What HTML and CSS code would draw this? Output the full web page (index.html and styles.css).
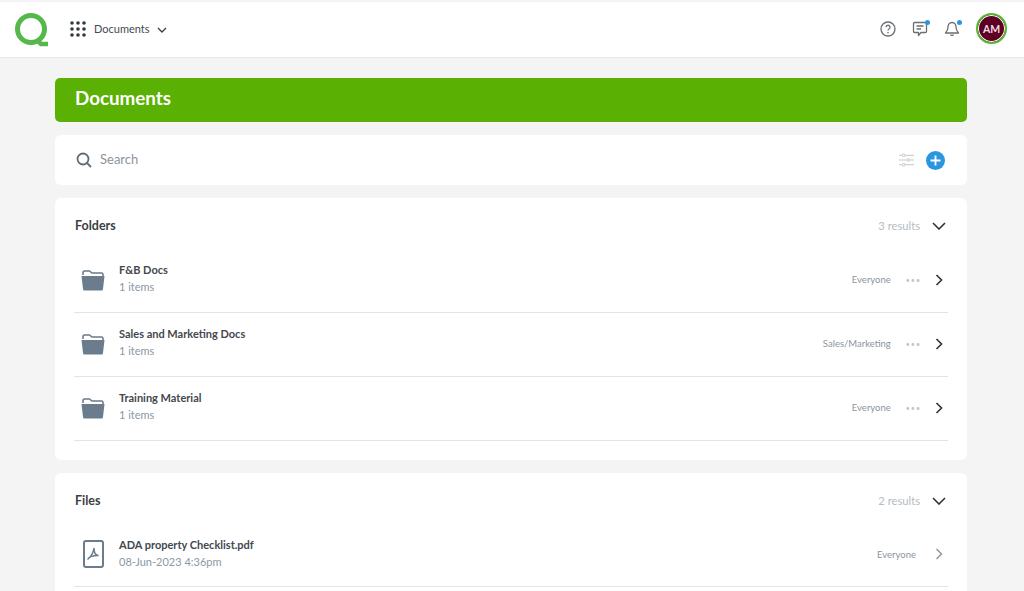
FILE: index.html
```html
<!DOCTYPE html>
<html lang="en">
<head>
<meta charset="utf-8">
<title>Documents</title>
<link rel="stylesheet" href="styles.css">
</head>
<body>
<header class="topbar">
  <svg class="logo" width="36" height="34" viewBox="0 0 36 34"><circle cx="17" cy="16" r="13.5" fill="none" stroke="#56b74a" stroke-width="5"/><path d="M22 26.5 L27 31 L34 31" fill="none" stroke="#56b74a" stroke-width="4.5"/></svg>
  <svg class="grid" width="16" height="16" viewBox="0 0 16 16" fill="#33383d"><circle cx="2" cy="2" r="1.800"/><circle cx="8" cy="2" r="1.800"/><circle cx="14" cy="2" r="1.800"/><circle cx="2" cy="8" r="1.800"/><circle cx="8" cy="8" r="1.800"/><circle cx="14" cy="8" r="1.800"/><circle cx="2" cy="14" r="1.800"/><circle cx="8" cy="14" r="1.800"/><circle cx="14" cy="14" r="1.800"/></svg>
  <span class="module">Documents</span>
  <svg class="caret" width="10" height="6" viewBox="0 0 10 6"><path d="M1 1l4 4 4-4" fill="none" stroke="#3a3f45" stroke-width="1.300"/></svg>
  <div class="top-icons">
    <svg width="16" height="16" viewBox="0 0 16 16"><circle cx="8" cy="8" r="7" fill="none" stroke="#6b6f73" stroke-width="1.300"/><path d="M6 6.300a2 2 0 1 1 3 1.700c-.7.4-1 .8-1 1.500" fill="none" stroke="#6b6f73" stroke-width="1.300"/><circle cx="8" cy="11.700" r=".8" fill="#6b6f73"/></svg>
    <span class="ic"><svg width="16" height="16" viewBox="0 0 16 16"><path d="M2.500 1.500h11a1 1 0 0 1 1 1v8a1 1 0 0 1-1 1H9l-2.500 3v-3h-4a1 1 0 0 1-1-1v-8a1 1 0 0 1 1-1z" fill="none" stroke="#6b6f73" stroke-width="1.300" stroke-linejoin="round"/><path d="M4.500 5h7M4.500 8h4.500" stroke="#6b6f73" stroke-width="1.300"/></svg><i class="dot"></i></span>
    <span class="ic"><svg width="16" height="16" viewBox="0 0 16 16"><path d="M8 1.500c-2.800 0-4 2-4 4.500 0 3-1 4.500-2.500 6h13c-1.500-1.500-2.500-3-2.500-6 0-2.500-1.200-4.500-4-4.500z" fill="none" stroke="#6b6f73" stroke-width="1.300" stroke-linejoin="round"/><path d="M6.500 13.500a1.600 1.600 0 0 0 3 0" fill="none" stroke="#6b6f73" stroke-width="1.300"/></svg><i class="dot"></i></span>
    <span class="avatar">AM</span>
  </div>
</header>
<main class="page">
  <h1 class="banner">Documents</h1>
  <section class="card searchbar">
    <svg width="16" height="16" viewBox="0 0 16 16"><circle cx="7" cy="7" r="5.500" fill="none" stroke="#5f6c78" stroke-width="1.800"/><path d="M11 11l4 4" stroke="#5f6c78" stroke-width="1.800"/></svg>
    <span class="search-label">Search</span>
    <svg class="sliders" width="15" height="14" viewBox="0 0 16 14" fill="#fff" stroke="#bcc5cc"><path d="M0 2h16M0 7h16M0 12h16"/><circle cx="5" cy="2" r="1.500"/><circle cx="10" cy="7" r="1.500"/><circle cx="5" cy="12" r="1.500"/></svg>
    <svg width="19" height="19" viewBox="0 0 19 19"><circle cx="9.500" cy="9.500" r="9.500" fill="#2b96e0"/><path d="M9.500 4.500v10M4.500 9.500h10" stroke="#fff" stroke-width="1.800"/></svg>
  </section>
  <section class="card list">
    <div class="list-head"><h2>Folders</h2><span class="count">3 results</span><svg class="toggle" width="14" height="8" viewBox="0 0 14 8"><path d="M1 1l6 6 6-6" fill="none" stroke="#2f3337" stroke-width="1.600"/></svg></div>
    <div class="row">
      <svg class="folder" width="24" height="22" viewBox="0 0 24 22"><path d="M2 6V3.500A1.500 1.500 0 0 1 3.500 2h5L11 4h9.500A1.500 1.500 0 0 1 22 5.500V7" fill="none" stroke="#6b7c8c" stroke-width="1.600"/><path d="M.5 7h23l-1.500 13a1.500 1.500 0 0 1-1.500 1.500h-17A1.500 1.500 0 0 1 2 20z" fill="#6b7c8c"/></svg>
      <div class="info"><div class="name">F&amp;B Docs</div><div class="sub">1 items</div></div>
      <span class="access">Everyone</span><span class="more">•••</span>
      <svg class="next" width="8" height="12" viewBox="0 0 8 12"><path d="M1.500 1l5 5-5 5" fill="none" stroke="#2f3337" stroke-width="1.600"/></svg>
    </div>
    <div class="row">
      <svg class="folder" width="24" height="22" viewBox="0 0 24 22"><path d="M2 6V3.500A1.500 1.500 0 0 1 3.500 2h5L11 4h9.500A1.500 1.500 0 0 1 22 5.500V7" fill="none" stroke="#6b7c8c" stroke-width="1.600"/><path d="M.5 7h23l-1.500 13a1.500 1.500 0 0 1-1.500 1.500h-17A1.500 1.500 0 0 1 2 20z" fill="#6b7c8c"/></svg>
      <div class="info"><div class="name">Sales and Marketing Docs</div><div class="sub">1 items</div></div>
      <span class="access">Sales/Marketing</span><span class="more">•••</span>
      <svg class="next" width="8" height="12" viewBox="0 0 8 12"><path d="M1.500 1l5 5-5 5" fill="none" stroke="#2f3337" stroke-width="1.600"/></svg>
    </div>
    <div class="row">
      <svg class="folder" width="24" height="22" viewBox="0 0 24 22"><path d="M2 6V3.500A1.500 1.500 0 0 1 3.500 2h5L11 4h9.500A1.500 1.500 0 0 1 22 5.500V7" fill="none" stroke="#6b7c8c" stroke-width="1.600"/><path d="M.5 7h23l-1.500 13a1.500 1.500 0 0 1-1.500 1.500h-17A1.500 1.500 0 0 1 2 20z" fill="#6b7c8c"/></svg>
      <div class="info"><div class="name">Training Material</div><div class="sub">1 items</div></div>
      <span class="access">Everyone</span><span class="more">•••</span>
      <svg class="next" width="8" height="12" viewBox="0 0 8 12"><path d="M1.500 1l5 5-5 5" fill="none" stroke="#2f3337" stroke-width="1.600"/></svg>
    </div>
  </section>
  <section class="card list files">
    <div class="list-head"><h2>Files</h2><span class="count">2 results</span><svg class="toggle" width="14" height="8" viewBox="0 0 14 8"><path d="M1 1l6 6 6-6" fill="none" stroke="#2f3337" stroke-width="1.600"/></svg></div>
    <div class="row">
      <svg class="folder" width="24" height="28" viewBox="0 0 24 28"><rect x="3" y="1" width="19" height="26" rx="2" fill="none" stroke="#6b7c8c" stroke-width="2"/><path d="M13 8c-.5 4-3 8.500-6 11 1-2 5-3.500 10-3.500-3-.5-4-3-4-7.500" fill="none" stroke="#6b7c8c" stroke-width="1.600" stroke-linejoin="round"/></svg>
      <div class="info"><div class="name">ADA property Checklist.pdf</div><div class="sub">08-Jun-2023 4:36pm</div></div>
      <span class="access">Everyone</span>
      <svg class="next file-next" width="8" height="12" viewBox="0 0 8 12"><path d="M1.500 1l5 5-5 5" fill="none" stroke="#8a9299" stroke-width="1.400"/></svg>
    </div>
  </section>
</main>
</body>
</html>
```
FILE: styles.css
```css
* { box-sizing: border-box; }
html, body { height: 591px; overflow: hidden; }
body { margin: 0; background: #f4f4f4; font-family: Lato, "Liberation Sans", sans-serif; color: #3a3f45; }
.topbar { margin-top: 2px; height: 56px; background: #fff; border-bottom: 1px solid #e6e6e6; display: flex; align-items: center; padding: 0 17px 2px 14px; }
.logo { margin-right: 20px; margin-top: 2px; }
.grid { margin-right: 8px; }
.module { font-size: 11px; color: #3f4a55; margin-right: 7px; }
.caret { margin-top: 2px; }
.top-icons { margin-left: auto; display: flex; align-items: center; gap: 16px; }
.ic { position: relative; display: flex; }
.dot { position: absolute; top: -1px; right: -2px; width: 5px; height: 5px; border-radius: 50%; background: #2b96e0; }
.avatar { width: 31px; height: 31px; border-radius: 50%; background: #5c0024; border: 2px solid #5cb531; box-shadow: inset 0 0 0 1px #fff; color: #f4d9e2; font-size: 10.500px; font-weight: 700; display: flex; align-items: center; justify-content: center; }
.page { padding: 20px 57px 0 55px; display: flex; flex-direction: column; gap: 13px; }
.banner { margin: 0; height: 44px; background: #5ab104; color: #fff; border-radius: 5px; font-size: 18.800px; font-weight: 700; line-height: 40px; padding-left: 20px; }
.card { background: #fff; border-radius: 6px; }
.searchbar { height: 50px; display: flex; align-items: center; padding: 0 22px 0 21px; }
.search-label { font-size: 13px; color: #8b959e; margin: -2px 0 0 8px; }
.sliders { margin-left: auto; margin-right: 12px; }
.list { padding: 0 19px 19px; }
.list-head { height: 51px; display: flex; align-items: center; padding-top: 5px; }
.files .list-head { height: 50px; padding-top: 6px; }
.list-head h2 { margin: -2px 0 0 1px; font-size: 12.500px; font-weight: 700; color: #3a3f45; }
.count { margin-left: auto; font-size: 11.200px; color: #b5bcc2; margin-top: -2px; }
.toggle { margin: -1px 2px 0 12px; }
.row { height: 64px; padding-bottom: 2px; border-bottom: 1px solid #e4e4e4; display: flex; align-items: center; }
.files .row { padding-bottom: 1px; }
.folder { margin: 0 14px 0 7px; flex: none; }
.name { font-size: 11px; font-weight: 700; color: #43484e; line-height: 16px; }
.sub { font-size: 11px; color: #8b98a5; line-height: 16px; margin-top: 1px; }
.info { margin-top: -2px; }
.access { margin-left: auto; font-size: 9.500px; color: #8b959e; }
.more { font-size: 7px; letter-spacing: 1px; color: #bcc4ca; margin: 0 14px 0 15px; }
.next { margin-right: 5px; }
.file-next { margin-left: 19px; }
```
